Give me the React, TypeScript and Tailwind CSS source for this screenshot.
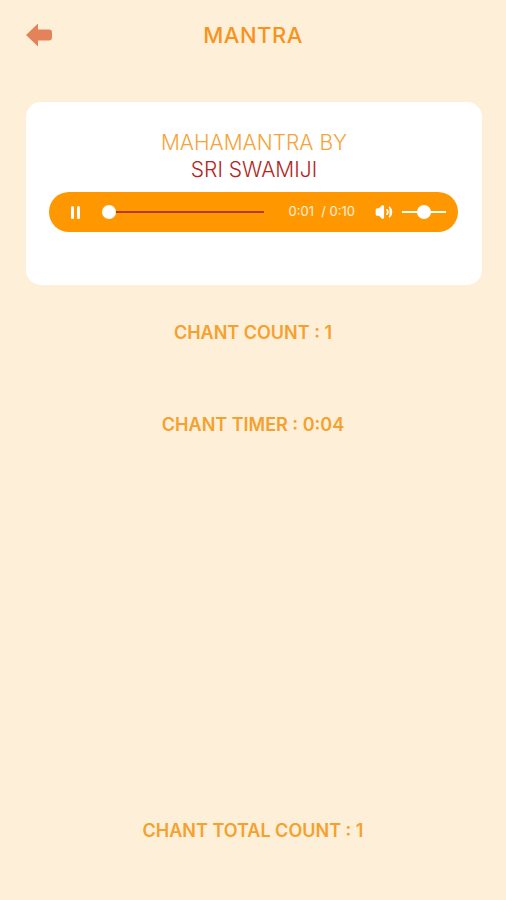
import { Volume2 } from 'lucide-react';

export default function App() {
    return (
        <div
            className="w-[506px] h-[900px] bg-[#fef0d8] flex flex-col"
            style={{ fontFamily: 'Inter, "Liberation Sans", Arial, sans-serif' }}
        >
            {/* header */}
            <div className="relative h-[70px] flex items-center justify-center">
                <button className="absolute left-[25px] top-[22px]">
                    <svg width="28" height="26" viewBox="0 0 28 26">
                        <path d="M1 13 L13 1.5 L13 7.5 L24 7.5 Q27 7.5 27 10.5 L27 15.5 Q27 18.5 24 18.5 L13 18.5 L13 24.5 Z" fill="#e4825a" />
                    </svg>
                </button>
                <div className="text-[22px] font-medium text-[#f7931e] tracking-[0.5px]">MANTRA</div>
            </div>

            {/* player card */}
            <div className="ml-[26px] w-[456px] mt-[32px] h-[183px] bg-white rounded-[15px] flex flex-col items-center pt-[28px]">
                <div className="text-[21px] leading-[26px] font-light text-[#f7a338]">MAHAMANTRA BY</div>
                <div className="text-[21px] leading-[28px] font-light text-[#b3261e]">SRI SWAMIJI</div>
                <div className="mt-[8px] -ml-[2px] w-[409px] h-[40px] rounded-full bg-[#ff9800] flex items-center pl-[22px] pr-[11px]">
                    <div className="flex gap-[3px] shrink-0">
                        <div className="w-[3px] h-[13px] bg-white rounded-sm" />
                        <div className="w-[3px] h-[13px] bg-white rounded-sm" />
                    </div>
                    <div className="relative shrink-0 ml-[23px] w-[161px] h-[14px] flex items-center">
                        <div className="ml-[6px] flex-1 h-[1.5px] bg-[#b83a10]" />
                        <div className="absolute left-[-1px] top-0 w-[14px] h-[14px] rounded-full bg-white" />
                    </div>
                    <div className="ml-[25px] shrink-0 whitespace-nowrap text-[13px] text-white/85">0:01 &nbsp;/ 0:10</div>
                    <Volume2 className="ml-[20px] shrink-0 text-white" size={18} fill="white" strokeWidth={2.2} />
                    <div className="relative shrink-0 ml-[9px] w-[44px] h-[14px] flex items-center">
                        <div className="w-full h-[2px] bg-white" />
                        <div className="absolute left-[15px] top-0 w-[14px] h-[14px] rounded-full bg-white" />
                    </div>
                </div>
            </div>

            {/* counters */}
            <div className="mt-[34px] text-center text-[18px] font-semibold text-[#f5a02f]">CHANT COUNT : 1</div>
            <div className="mt-[65px] text-center text-[18px] font-semibold text-[#f5a02f]">CHANT TIMER : 0:04</div>
            <div className="flex-1" />
            <div className="mb-[56px] text-center text-[18px] font-semibold text-[#f5a02f]">CHANT TOTAL COUNT : 1</div>
        </div>
    );
}
